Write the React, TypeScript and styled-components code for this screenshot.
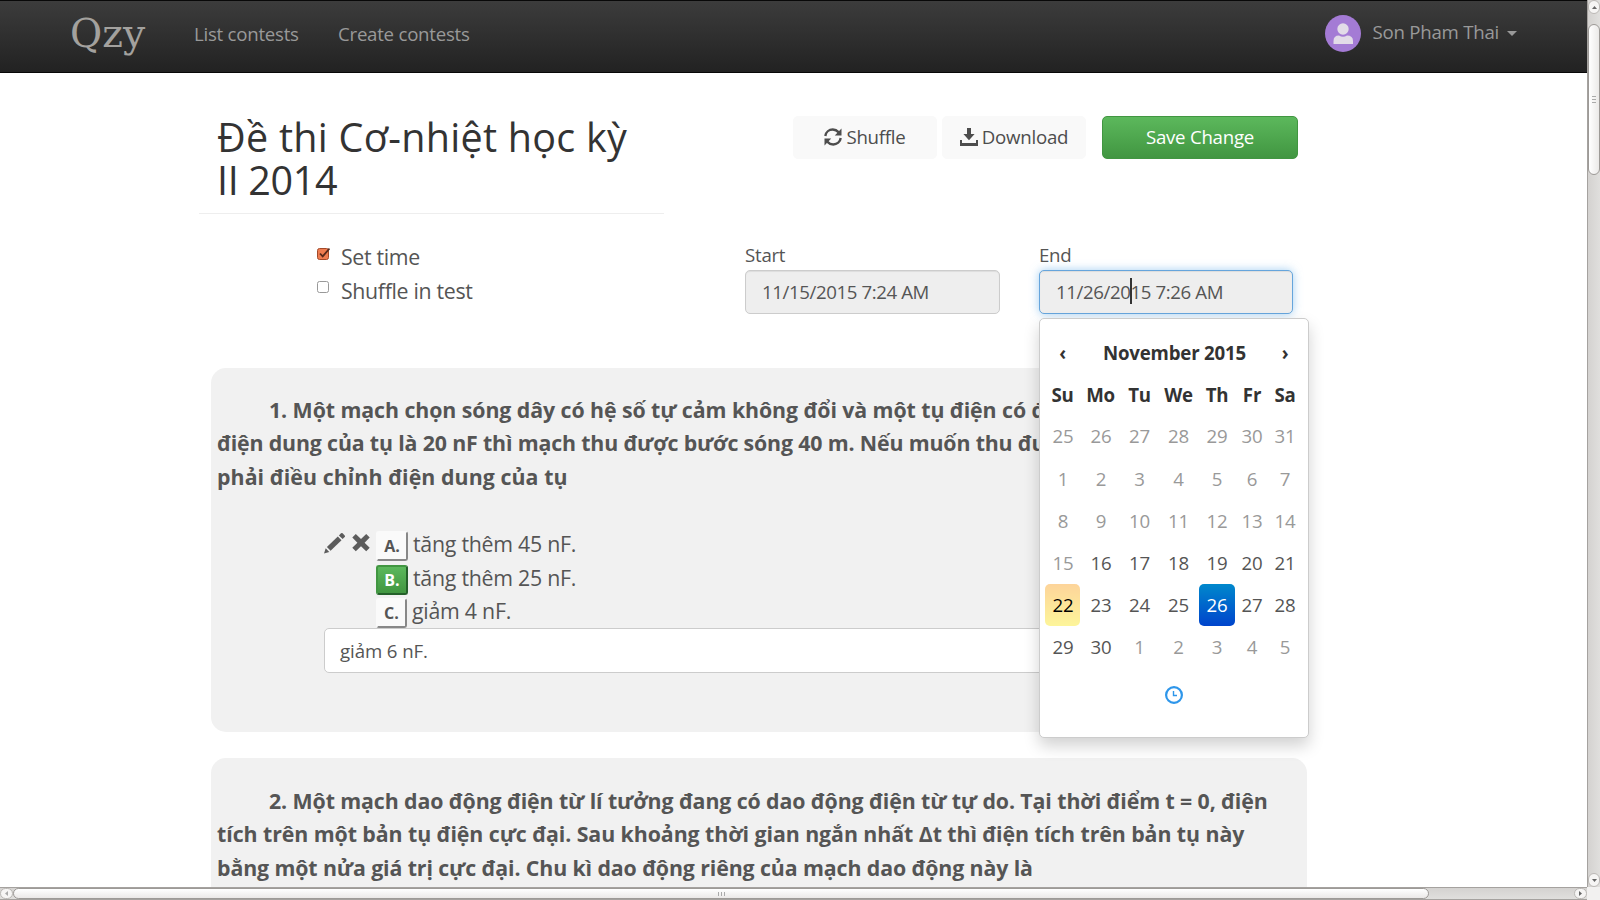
import React from 'react';
import styled, { createGlobalStyle } from 'styled-components';

const GlobalStyle = createGlobalStyle`
  *, *::before, *::after { box-sizing: border-box; }
  html, body { margin: 0; padding: 0; overflow: hidden; background: #fff; }
  body {
    font-family: 'Open Sans', 'Noto Sans', sans-serif;
    font-size: 18.67px;
    letter-spacing: -0.25px;
    color: #555;
  }
`;

const Browser = styled.div`
  display: grid;
  grid-template-columns: 1587px 13px;
  grid-template-rows: 887px 13px;
  width: 1600px;
  height: 900px;
`;

const Page = styled.div`
  overflow: hidden;
  background: #fff;
`;

/* ---------- navigation ---------- */
const Navbar = styled.nav`
  display: flex;
  align-items: flex-start;
  height: 73px;
  padding: 0 70px 0 70px;
  border-top: 1px solid #080808;
  border-bottom: 1px solid #080808;
  background: linear-gradient(to bottom, #3c3c3c 0%, #222 100%);
  color: #999;
`;

const Brand = styled.a`
  width: 124px;
  font: 39.3px/65px 'DejaVu Serif', serif;
  letter-spacing: 0;
  color: #a3a19e;
`;

const NavLink = styled.a<{ $width: number }>`
  width: ${(p) => p.$width}px;
  line-height: 66px;
  white-space: nowrap;
`;

const UserMenu = styled.div`
  display: flex;
  align-items: flex-start;
  margin-left: auto;
  line-height: 62px;
`;

const Avatar = styled.svg`
  width: 36px;
  height: 37px;
  margin: 14px 12px 0 0;
`;

const Caret = styled.span`
  margin: 30px 0 0 8px;
  border: 5px solid transparent;
  border-top-color: #999;
  border-bottom: 0;
`;

/* ---------- heading ---------- */
const Heading = styled.header`
  display: flex;
  align-items: flex-start;
  padding-left: 199px;
  margin-top: 42px;
  height: 99px;
`;

const Title = styled.h1`
  width: 465px;
  height: 99px;
  margin: 0 129px 0 0;
  padding: 1px 0 0 18px;
  border-bottom: 1px solid #eee;
  font-size: 39.5px;
  font-weight: 400;
  line-height: 43px;
  letter-spacing: 0.28px;
  color: #333;
  white-space: nowrap;
`;

const TitleTail = styled.span`
  letter-spacing: -0.35px;
`;

const Button = styled.button<{ $primary?: boolean }>`
  display: flex;
  align-items: center;
  justify-content: center;
  gap: 4px;
  width: ${(p) => (p.$primary ? 196 : 144)}px;
  height: 43px;
  margin: 1px ${(p) => (p.$primary ? 0 : 5)}px 0 ${(p) => (p.$primary ? 11 : 0)}px;
  padding: 0 0 2px;
  border: 1px solid ${(p) => (p.$primary ? '#419641' : '#f9f9f9')};
  border-radius: 5px;
  background: ${(p) => (p.$primary ? 'linear-gradient(#5cb85c, #419641)' : '#f9f9f9')};
  color: ${(p) => (p.$primary ? '#fff' : '#4d4d4d')};
  font: 18.67px 'Open Sans', sans-serif;
  letter-spacing: -0.25px;
`;

/* ---------- options ---------- */
const Options = styled.section`
  display: flex;
  height: 154px;
  padding: 26px 0 0 317px;
`;

const Checks = styled.div`
  width: 428px;
`;

const CheckLabel = styled.label`
  display: flex;
  gap: 11px;
  height: 33.5px;
  font-size: 21.33px;
  letter-spacing: -0.33px;
  line-height: 33.5px;
`;

const CheckIcon = styled.svg`
  width: 13px;
  height: 14px;
  margin-top: 6.5px;
`;

const Field = styled.div`
  position: relative;
  width: 255px;
  margin-right: 39px;

  & + & {
    width: 254px;
  }
`;

const FieldLabel = styled.label`
  display: block;
  height: 30px;
  line-height: 30px;
`;

const DateInput = styled.div<{ $focused?: boolean }>`
  display: flex;
  align-items: center;
  height: 44px;
  padding: 0 0 2px 16px;
  border: 1px solid ${(p) => (p.$focused ? '#66a5dc' : '#ccc')};
  border-radius: 5px;
  background: #eee;
  box-shadow: inset 0 1px 1px rgba(0, 0, 0, 0.075)${(p) => (p.$focused ? ', 0 0 10px rgba(102, 175, 233, 0.6)' : '')};
  font-size: 18.67px;
  letter-spacing: -0.4px;
  white-space: pre;
`;

const TextCursor = styled.span`
  width: 2px;
  height: 26px;
  margin: 0 -1px;
  background: #333;
`;

/* ---------- date picker ---------- */
const Picker = styled.div`
  position: absolute;
  z-index: 2;
  top: 78px;
  left: 0;
  width: 270px;
  height: 420px;
  padding: 12px 6px 0 5px;
  border: 1px solid #ccc;
  border-radius: 5px;
  background: #fff;
  box-shadow: 0 8px 16px rgba(0, 0, 0, 0.18);
`;

const PickerGrid = styled.div`
  display: grid;
  grid-template-columns: 35px 41px 37px 41px 36px 34px 32px;
  grid-auto-rows: 42.2px;
  text-align: center;
  line-height: 42px;
  font-size: 18.67px;
  letter-spacing: -0.2px;
`;

const PickerHead = styled.div<{ $span?: number }>`
  grid-column: span ${(p) => p.$span || 1};
  padding-top: 0.5px;
  color: #333;
  font-weight: 700;
`;

type DayKind = 'normal' | 'muted' | 'today' | 'active';
const dayFill = {
  normal: 'none',
  muted: 'none',
  today: 'linear-gradient(#fdd49a, #fdf59a)',
  active: 'linear-gradient(#0088cc, #0044cc)',
};
const dayInk = { normal: '#555', muted: '#999', today: '#000', active: '#fff' };

const Day = styled.div<{ $kind: DayKind; $nudge: boolean }>`
  padding-left: ${(p) => (p.$nudge ? 1 : 0)}px;
  border-radius: 5px;
  background: ${(p) => dayFill[p.$kind]};
  color: ${(p) => dayInk[p.$kind]};
`;

const TimeToggle = styled.div`
  display: flex;
  justify-content: center;
  padding: 16px 0 0 1px;
`;

/* ---------- questions ---------- */
const Card = styled.article`
  width: 1096px;
  height: 364px;
  margin: 0 0 26px 211px;
  padding: 25px 6px 0;
  border-radius: 15px;
  background: #f1f1f1;
  overflow: hidden;

  & + & {
    padding-top: 26px;
  }
`;

const Question = styled.div`
  font-size: 21.33px;
  font-weight: 700;
  line-height: 33.4px;
  white-space: nowrap;
`;

const Line = styled.div<{ $track: number; $indent?: boolean }>`
  width: max-content;
  padding-left: ${(p) => (p.$indent ? 52 : 0)}px;
  letter-spacing: ${(p) => p.$track}px;
`;

const Answers = styled.div`
  margin-top: 34px;
  padding-left: 107px;
`;

const Answer = styled.div`
  display: flex;
  height: 33.5px;
  font-size: 21.33px;
  line-height: 33.5px;
`;

const Tools = styled.div`
  display: flex;
  width: 52px;
  gap: 7px;
  padding-top: 4.5px;
`;

const Letter = styled.span<{ $right?: boolean; $narrow?: boolean }>`
  width: ${(p) => (p.$narrow ? 31 : 32)}px;
  height: 30px;
  margin: 4px 5px 0 0;
  border: 2px solid ${(p) => (p.$right ? '#419641' : '#fafafa')};
  border-right-color: ${(p) => (p.$right ? '#24602a' : '#888')};
  border-bottom-color: ${(p) => (p.$right ? '#24602a' : '#888')};
  border-radius: 3px;
  background: ${(p) => (p.$right ? 'linear-gradient(#5cb85c, #419641)' : '#fafafa')};
  color: ${(p) => (p.$right ? '#fff' : '#555')};
  font-size: 16px;
  font-weight: 700;
  line-height: 27px;
  letter-spacing: 0;
  text-align: center;
`;

const AnswerInput = styled.div`
  width: 950px;
  height: 45px;
  padding-left: 15px;
  border: 1px solid #ccc;
  border-radius: 5px;
  background: #fff;
  letter-spacing: -0.1px;
  line-height: 44px;
`;

/* ---------- scrollbars ---------- */
const Track = styled.div<{ $vertical?: boolean }>`
  display: flex;
  flex-direction: ${(p) => (p.$vertical ? 'column' : 'row')};
  border: solid #a5a29f;
  border-width: ${(p) => (p.$vertical ? '0 0 0 1px' : '1px 0')};
  background: linear-gradient(${(p) => (p.$vertical ? 'to right' : 'to bottom')}, #d4d2d0, #e0dfdd);
`;

const Cap = styled.div<{ $vertical?: boolean }>`
  display: flex;
  flex: none;
  align-items: center;
  justify-content: center;
  width: ${(p) => (p.$vertical ? 12 : 13)}px;
  height: ${(p) => (p.$vertical ? 14 : 11)}px;
  border: 1px solid #bbb8b5;
  border-radius: 6px;
  background: #f6f5f4;
`;

const Thumb = styled.div<{ $vertical?: boolean; $size: number; $before: number }>`
  display: flex;
  flex: none;
  flex-direction: ${(p) => (p.$vertical ? 'column' : 'row')};
  align-items: center;
  justify-content: center;
  gap: 2px;
  ${(p) => (p.$vertical ? 'width: 12px; height' : 'height: 11px; width')}: ${(p) => p.$size}px;
  margin-${(p) => (p.$vertical ? 'top' : 'left')}: ${(p) => p.$before}px;
  margin-${(p) => (p.$vertical ? 'bottom' : 'right')}: auto;
  border: 1px solid #9d9a97;
  border-radius: 7px;
  background: linear-gradient(${(p) => (p.$vertical ? 'to right' : 'to bottom')}, #fff, #ebe9e8);
`;

const Grip = styled.i<{ $vertical?: boolean }>`
  width: ${(p) => (p.$vertical ? 4 : 1)}px;
  height: ${(p) => (p.$vertical ? 1 : 4)}px;
  background: #aaa;
`;

const Corner = styled.div`
  background: #f2f1f0;
`;

const Arrow = ({ turn, faded }: { turn: number; faded?: boolean }) => (
  <svg width="7" height="7" viewBox="0 0 7 7">
    <path d="M1 5L3.5 2L6 5Z" fill={faded ? '#aaa' : '#666'} transform={`rotate(${turn} 3.5 3.5)`} />
  </svg>
);

const Grips = ({ vertical }: { vertical?: boolean }) => (
  <>
    {[0, 1, 2].map((i) => (
      <Grip key={i} $vertical={vertical} />
    ))}
  </>
);

const RefreshIcon = () => (
  <svg width="18" height="18" viewBox="0 0 18 18" fill="none">
    <path d="M1.3 8C1.8 4.2 5 1.5 8.8 1.5C11.4 1.5 13.2 2.7 14.8 4.4" stroke="#4d4d4d" strokeWidth="2.4" />
    <path d="M17.5 .6V7.4H10.8Z" fill="#4d4d4d" />
    <path d="M16.7 10C16.2 13.8 13 16.5 9.2 16.5C6.6 16.5 4.8 15.3 3.2 13.6" stroke="#4d4d4d" strokeWidth="2.4" />
    <path d="M.5 17.4V10.6H7.2Z" fill="#4d4d4d" />
  </svg>
);

const DownloadIcon = () => (
  <svg width="18" height="18" viewBox="0 0 18 18" fill="#4d4d4d">
    <path d="M7 0H11V6H14.6L9 12.2L3.4 6H7Z" />
    <path d="M0 12H2V15H16V12H18V18H0Z" />
  </svg>
);

const PencilIcon = () => (
  <svg width="21" height="22" viewBox="0 0 21 22" fill="#5c5c5c">
    <path d="M0 21.5L1.7 16.3L5.3 19.9Z" />
    <path d="M2.9 15.1L13.8 4.5L17.5 8.2L6.6 18.8Z" />
    <path d="M14.9 3.4L17 1.3Q17.8.6 18.6 1.3L20.7 3.4Q21.3 4.3 20.7 5L18.6 7.1Z" />
  </svg>
);

const RemoveIcon = () => (
  <svg width="18" height="20" viewBox="0 0 18 20" fill="#5c5c5c">
    <path d="M3.8 2L9 7.1L14.2 2L17.7 5.5L12.6 10.7L17.7 15.8L14.2 19.3L9 14.2L3.8 19.3L.3 15.8L5.4 10.7L.3 5.5Z" />
  </svg>
);

const rows = [
  [25, 26, 27, 28, 29, 30, 31],
  [1, 2, 3, 4, 5, 6, 7],
  [8, 9, 10, 11, 12, 13, 14],
  [15, 16, 17, 18, 19, 20, 21],
  [22, 23, 24, 25, 26, 27, 28],
  [29, 30, 1, 2, 3, 4, 5],
];

const kindOf = (row: number, col: number): DayKind => {
  if (row === 4 && col === 0) return 'today';
  if (row === 4 && col === 4) return 'active';
  if (row < 3 || (row === 3 && col === 0) || (row === 5 && col > 1)) return 'muted';
  return 'normal';
};

const Calendar = () => (
  <Picker>
    <PickerGrid>
      <PickerHead>‹</PickerHead>
      <PickerHead $span={5}>November 2015</PickerHead>
      <PickerHead>›</PickerHead>
      {['Su', 'Mo', 'Tu', 'We', 'Th', 'Fr', 'Sa'].map((d) => (
        <PickerHead key={d}>{d}</PickerHead>
      ))}
      {rows.map((r, i) =>
        r.map((d, j) => (
          <Day key={`${i}-${j}`} $kind={kindOf(i, j)} $nudge={j < 2}>
            {d}
          </Day>
        )),
      )}
    </PickerGrid>
    <TimeToggle>
      <svg width="20" height="20" viewBox="0 0 20 20" fill="none" stroke="#2e96ea">
        <circle cx="10" cy="10" r="7.9" strokeWidth="2.2" />
        <path d="M9.5 6V10.5H13" strokeWidth="1.4" />
      </svg>
    </TimeToggle>
  </Picker>
);

export default function App() {
  return (
    <>
      <GlobalStyle />
      <Browser>
        <Page>
          <Navbar>
            <Brand>Qzy</Brand>
            <NavLink $width={144}>List contests</NavLink>
            <NavLink $width={140}>Create contests</NavLink>
            <UserMenu>
              <Avatar viewBox="0 0 36 37">
                <ellipse cx="18" cy="18.5" rx="18" ry="18.5" fill="#a47bd5" />
                <circle cx="18" cy="14" r="5.7" fill="#e2dbe8" />
                <path d="M8.5 29V26Q8.5 20.5 14 20.5Q18 23 22 20.5Q28 20.5 28 26V29Z" fill="#e2dbe8" />
              </Avatar>
              Son Pham Thai
              <Caret />
            </UserMenu>
          </Navbar>

          <Heading>
            <Title>
              Đề thi Cơ-nhiệt học kỳ
              <br />
              <TitleTail>II 2014</TitleTail>
            </Title>
            <Button>
              <RefreshIcon />
              Shuffle
            </Button>
            <Button>
              <DownloadIcon />
              Download
            </Button>
            <Button $primary>Save Change</Button>
          </Heading>

          <Options>
            <Checks>
              <CheckLabel>
                <CheckIcon viewBox="0 0 13 14">
                  <rect x=".5" y="1.5" width="11" height="11" rx="2" fill="#ee7c50" stroke="#a34a2a" />
                  <path d="M3 6.5L5.7 9.4L12.5 1.5" fill="none" stroke="#57291b" strokeWidth="1.8" />
                </CheckIcon>
                Set time
              </CheckLabel>
              <CheckLabel>
                <CheckIcon viewBox="0 0 13 14">
                  <rect x=".5" y="1.5" width="11" height="11" rx="2" fill="#fff" stroke="#999" />
                </CheckIcon>
                Shuffle in test
              </CheckLabel>
            </Checks>
            <Field>
              <FieldLabel>Start</FieldLabel>
              <DateInput>11/15/2015 7:24 AM</DateInput>
            </Field>
            <Field>
              <FieldLabel>End</FieldLabel>
              <DateInput $focused>
                11/26/20
                <TextCursor />
                15 7:26 AM
              </DateInput>
              <Calendar />
            </Field>
          </Options>

          <Card>
            <Question>
              <Line $indent $track={-0.075}>
                1. Một mạch chọn sóng dây có hệ số tự cảm không đổi và một tụ điện có đ
              </Line>
              <Line $track={-0.155}>
                điện dung của tụ là 20 nF thì mạch thu được bước sóng 40 m. Nếu muốn thu đư
              </Line>
              <Line $track={0.07}>phải điều chỉnh điện dung của tụ</Line>
            </Question>
            <Answers>
              <Answer>
                <Tools>
                  <PencilIcon />
                  <RemoveIcon />
                </Tools>
                <Letter>A.</Letter>
                tăng thêm 45 nF.
              </Answer>
              <Answer>
                <Tools />
                <Letter $right>B.</Letter>
                tăng thêm 25 nF.
              </Answer>
              <Answer>
                <Tools />
                <Letter $narrow>C.</Letter>
                giảm 4 nF.
              </Answer>
              <AnswerInput>giảm 6 nF.</AnswerInput>
            </Answers>
          </Card>

          <Card>
            <Question>
              <Line $indent $track={-0.1}>
                2. Một mạch dao động điện từ lí tưởng đang có dao động điện từ tự do. Tại thời điểm t = 0, điện
              </Line>
              <Line $track={-0.07}>
                tích trên một bản tụ điện cực đại. Sau khoảng thời gian ngắn nhất Δt thì điện tích trên bản tụ này
              </Line>
              <Line $track={-0.11}>
                bằng một nửa giá trị cực đại. Chu kì dao động riêng của mạch dao động này là
              </Line>
            </Question>
          </Card>
        </Page>

        <Track $vertical>
          <Cap $vertical>
            <Arrow turn={0} />
          </Cap>
          <Thumb $vertical $size={151} $before={10}>
            <Grips vertical />
          </Thumb>
          <Cap $vertical>
            <Arrow turn={180} />
          </Cap>
        </Track>
        <Track>
          <Cap>
            <Arrow turn={-90} faded />
          </Cap>
          <Thumb $size={1416} $before={0}>
            <Grips />
          </Thumb>
          <Cap>
            <Arrow turn={90} />
          </Cap>
        </Track>
        <Corner />
      </Browser>
    </>
  );
}
